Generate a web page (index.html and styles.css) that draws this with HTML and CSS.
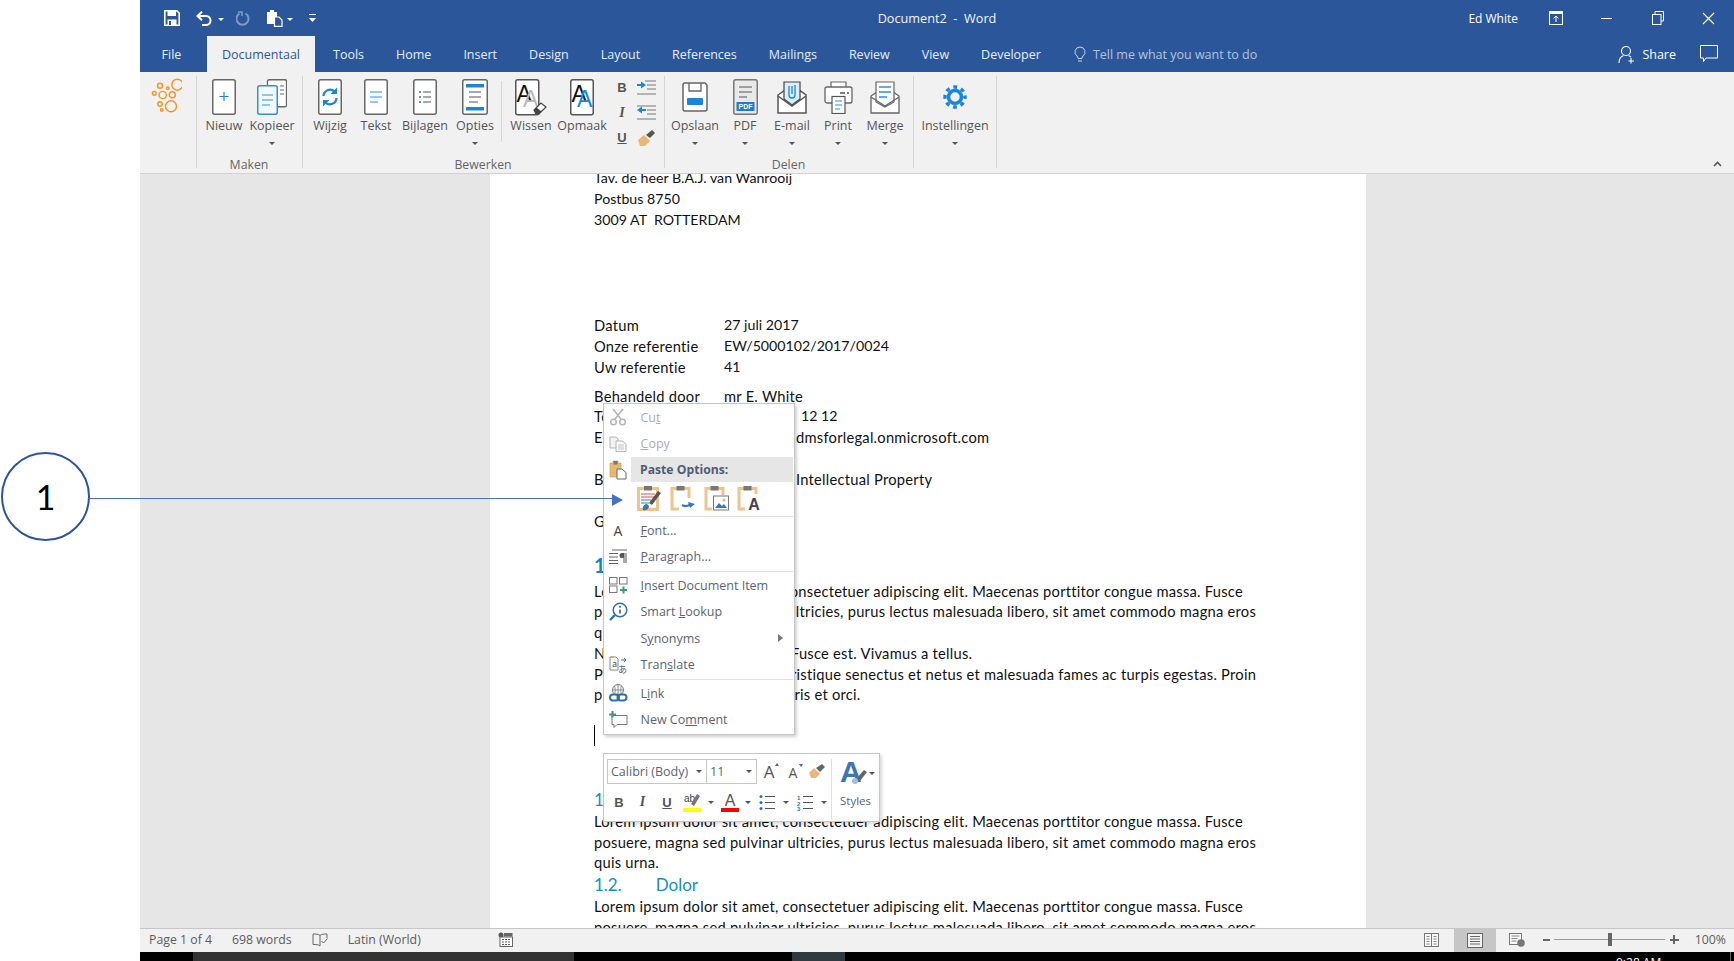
FILE: index.html
```html
<!DOCTYPE html>
<html lang="en">
<head>
  <meta charset="UTF-8">
  <title>Document2 - Word</title>
  <link rel="stylesheet" href="styles.css">
</head>
<body>
<div class="app">
  <div class="gutter"></div>

  <div class="word">
    <!-- title bar -->
    <div class="titlebar">
      <div class="qat">
        <svg class="q-save" width="16" height="16" viewBox="0 0 16 16"><path d="M.8.8h12l2.4 2.4v12H.8z" fill="none" stroke="#fff" stroke-width="1.6"/><rect x="3.5" y="1" width="8.5" height="5" fill="#fff"/><rect x="3.5" y="9.5" width="9" height="5.5" fill="#fff"/><rect x="5" y="11" width="2" height="4" fill="#2b579a"/></svg>
        <svg class="q-undo" width="16" height="15" viewBox="0 0 16 15"><path d="M3 5h7a4.5 4.5 0 0 1 0 9H6" fill="none" stroke="#fff" stroke-width="2"/><path d="M6 .8 1.5 5 6 9.2" fill="none" stroke="#fff" stroke-width="2"/></svg>
        <span class="caret caret-white q-dd1"></span>
        <svg class="q-redo" width="14" height="15" viewBox="0 0 14 15"><path d="M9.5 2.5a6 6 0 1 1-6 0" fill="none" stroke="#7e9bc6" stroke-width="2"/><path d="M2 1h4v4" fill="none" stroke="#7e9bc6" stroke-width="1.6"/></svg>
        <svg class="q-paste" width="18" height="18" viewBox="0 0 18 18"><path d="M1 3h3V1h4v2h3v12H1z" fill="#fff"/><path d="M8.5 8H13l3 3v6.300H8.500z" fill="#2b579a" stroke="#fff" stroke-width="1.200"/></svg>
        <span class="caret caret-white q-dd2"></span>
        <svg class="q-cust" width="7" height="9" viewBox="0 0 7 9"><rect y="0" width="7" height="1" fill="#fff"/><path d="M0 4h7L3.500 8z" fill="#fff"/></svg>
      </div>
      <div class="doc-title">Document2 &nbsp;-&nbsp; Word</div>
      <div class="win-side">
        <span class="user">Ed White</span>
        <span class="win-btn"><svg width="14" height="14" viewBox="0 0 14 14"><rect x=".5" y=".5" width="13" height="13" fill="none" stroke="#fff"/><rect x="1" y="1" width="12" height="2" fill="#fff"/><path d="M7 11V5M4.500 7.500 7 5l2.500 2.500" fill="none" stroke="#fff"/></svg></span>
        <span class="win-btn"><svg width="11" height="11" viewBox="0 0 11 11"><rect y="5" width="11" height="1" fill="#fff"/></svg></span>
        <span class="win-btn"><svg width="12" height="14" viewBox="0 0 12 14"><path d="M3 3V.5h8.500V10H9" fill="none" stroke="#fff"/><rect x=".5" y="3.500" width="8.500" height="10" fill="none" stroke="#fff"/></svg></span>
        <span class="win-btn"><svg width="13" height="13" viewBox="0 0 13 13"><path d="M1 1l11 11M12 1 1 12" stroke="#fff" stroke-width="1.100"/></svg></span>
      </div>
    </div>

    <!-- tabs -->
    <div class="tabs">
      <span class="tab tab-file">File</span>
      <span class="tab tab-active">Documentaal</span>
      <span class="tab">Tools</span>
      <span class="tab">Home</span>
      <span class="tab">Insert</span>
      <span class="tab">Design</span>
      <span class="tab">Layout</span>
      <span class="tab">References</span>
      <span class="tab">Mailings</span>
      <span class="tab">Review</span>
      <span class="tab">View</span>
      <span class="tab">Developer</span>
      <span class="tell">
        <svg width="12" height="17" viewBox="0 0 12 17"><path d="M6 1a5 5 0 0 0-3 9c.6.600 1 1.400 1 2.500h4c0-1.100.4-1.900 1-2.500a5 5 0 0 0-3-9z" fill="none" stroke="#c9d6ea"/><path d="M4 15h4" stroke="#c9d6ea"/></svg>
        Tell me what you want to do
      </span>
      <span class="share">
        <svg width="18" height="19" viewBox="0 0 18 19"><circle cx="8" cy="6" r="4.500" fill="none" stroke="#fff" stroke-width="1.100"/><path d="M1 18c0-4 2-6.500 4.500-7.500M10.500 10.500c1 .4 2 1 2.500 1.800" fill="none" stroke="#fff" stroke-width="1.100"/><path d="M13 13v5.500M10.500 16h5.500" stroke="#fff" stroke-width="1.100"/></svg>
        <span class="share-txt">Share</span>
      </span>
      <svg class="comment" width="18" height="18" viewBox="0 0 18 18"><path d="M.5.5h17v12.500H6l-2.500 3.500V13H.5z" fill="none" stroke="#fff"/></svg>
    </div>

    <!-- ribbon -->
    <div class="ribbon">
      <div class="group g-logo">
        <svg class="logo" width="32" height="38" viewBox="0 0 32 38"><g fill="none" stroke="#f7941d" stroke-width="1.400"><circle cx="27.300" cy="7.700" r="5.500"/><circle cx="10" cy="8.700" r="2.500"/><circle cx="17.700" cy="11.300" r="1.300"/><circle cx="4.300" cy="16.300" r="1.900"/><circle cx="12.700" cy="18" r="3.600"/><circle cx="22.300" cy="17.700" r="3"/><circle cx="10" cy="27" r="2.200"/><circle cx="21" cy="29.300" r="5.500"/><circle cx="11.700" cy="33" r="1.300"/></g></svg>
      </div>

      <div class="group g-maken">
        <div class="btns">
          <div class="rb w48">
            <div class="ico"><svg width="24" height="36" viewBox="0 0 24 36"><rect x=".75" y=".75" width="22.500" height="34.500" rx="2" fill="#fff" stroke="#666" stroke-width="1.500"/><path d="M12 13v9M7.500 17.500h9" stroke="#1a86d9" stroke-width="1.200"/></svg></div>
            <span class="rb-label">Nieuw</span>
          </div>
          <div class="rb w48">
            <div class="ico"><svg width="30" height="36" viewBox="0 0 30 36"><rect x="10.500" y=".75" width="19" height="27" rx="1.500" fill="#fff" stroke="#666" stroke-width="1.300"/><path d="M23 7h4M23 11h4M23 15h4" stroke="#666"/><rect x=".75" y="6.750" width="19.500" height="28.500" rx="2" fill="#f3f9ff" stroke="#2e8fe0" stroke-width="1.500"/><path d="M5 16h11M5 21h11M5 26h8" stroke="#2e8fe0" stroke-width="1.200"/></svg></div>
            <span class="rb-label">Kopieer</span>
            <span class="caret"></span>
          </div>
        </div>
        <div class="group-label">Maken</div>
      </div>

      <div class="group g-bewerken">
        <div class="btns">
          <div class="rb w48">
            <div class="ico"><svg width="24" height="36" viewBox="0 0 24 36"><rect x=".75" y=".75" width="22.500" height="34.500" rx="2" fill="#fff" stroke="#666" stroke-width="1.500"/><path d="M5.500 17a6.500 6.500 0 0 1 11-4.500M18.500 19a6.500 6.500 0 0 1-11 4.500" fill="none" stroke="#1a86d9" stroke-width="2.200"/><path d="M19 8.500v6.500h-6.500zM5 27.500V21h6.500z" fill="#1a86d9"/></svg></div>
            <span class="rb-label">Wijzig</span>
          </div>
          <div class="rb w44">
            <div class="ico"><svg width="24" height="36" viewBox="0 0 24 36"><rect x=".75" y=".75" width="22.500" height="34.500" rx="2" fill="#fff" stroke="#666" stroke-width="1.500"/><path d="M6 13h12M6 18h12M6 23h8" stroke="#2e8fe0" stroke-width="1.200"/></svg></div>
            <span class="rb-label">Tekst</span>
          </div>
          <div class="rb w54">
            <div class="ico"><svg width="24" height="36" viewBox="0 0 24 36"><rect x=".75" y=".75" width="22.500" height="34.500" rx="2" fill="#fff" stroke="#666" stroke-width="1.500"/><path d="M6 13h2M6 18h2M6 23h2" stroke="#1e6fb8" stroke-width="1.600"/><path d="M10 13h8M10 18h8M10 23h8" stroke="#555" stroke-width="1.100"/></svg></div>
            <span class="rb-label">Bijlagen</span>
          </div>
          <div class="rb w46">
            <div class="ico"><svg width="26" height="36" viewBox="0 0 26 36"><rect x=".75" y=".75" width="24.500" height="34.500" rx="2" fill="#fff" stroke="#666" stroke-width="1.500"/><rect x="4" y="5" width="18" height="3.500" fill="#1a86d9"/><rect x="4" y="28" width="18" height="3.500" fill="#1a86d9"/><path d="M7 13h12M7 18h12M7 23h9" stroke="#555" stroke-width="1.100"/></svg></div>
            <span class="rb-label">Opties</span>
            <span class="caret"></span>
          </div>
          <div class="rb-sep"></div>
          <div class="rb w50">
            <div class="ico"><svg width="32" height="37" viewBox="0 0 32 37"><rect x=".75" y=".75" width="23" height="35" rx="2" fill="#fff" stroke="#555" stroke-width="1.500"/><text x="1.500" y="23" class="svg-a a-dark">A</text><text x="8" y="28" class="svg-a a-gray">A</text><path d="M19 31l7-7 5 4-7 7h-3z" fill="#fff" stroke="#444" stroke-width="1.200"/><path d="M19 31l2.500-2.500 5 4L24 35h-3z" fill="#444"/></svg></div>
            <span class="rb-label">Wissen</span>
          </div>
          <div class="rb w52">
            <div class="ico"><svg width="24" height="37" viewBox="0 0 24 37"><rect x=".75" y=".75" width="22.500" height="35" rx="2" fill="#fff" stroke="#555" stroke-width="1.500"/><text x="1.500" y="23" class="svg-a a-dark">A</text><text x="7" y="28" class="svg-a a-blue">A</text></svg></div>
            <span class="rb-label">Opmaak</span>
          </div>
          <div class="small-grid">
            <span class="fmt fmt-b">B</span>
            <svg width="19" height="15" viewBox="0 0 19 15"><path d="M8 1h11M10 5h9M10 9h9M0 14h19" stroke="#777"/><path d="M0 5h4" stroke="#1a86d9" stroke-width="2"/><path d="M4 1.500 9 5 4 8.500z" fill="#1a86d9"/></svg>
            <span class="fmt fmt-i">I</span>
            <svg width="19" height="15" viewBox="0 0 19 15"><path d="M0 1h19M10 5h9M10 9h9M0 14h19" stroke="#777"/><path d="M5 5h4" stroke="#1a86d9" stroke-width="2"/><path d="M5 1.500 0 5l5 3.500z" fill="#1a86d9"/></svg>
            <span class="fmt fmt-u">U</span>
            <svg width="19" height="17" viewBox="0 0 19 17"><path d="M1 11l6-5 6 6-5 5H3z" fill="#e8b776"/><path d="M9 6l6-5 3 3-5 5z" fill="#555"/></svg>
          </div>
        </div>
        <div class="group-label">Bewerken</div>
      </div>

      <div class="group g-delen">
        <div class="btns">
          <div class="rb w54">
            <div class="ico ico-low3"><svg width="26" height="30" viewBox="0 0 26 30"><path d="M3 1h20l2 2v24a2 2 0 0 1-2 2H3a2 2 0 0 1-2-2V3a2 2 0 0 1 2-2z" fill="#fff" stroke="#666" stroke-width="1.500"/><path d="M7 1v8h12V1" fill="none" stroke="#666" stroke-width="1.300"/><rect x="5" y="16" width="16" height="7" rx="1" fill="#1a86d9"/></svg></div>
            <span class="rb-label">Opslaan</span>
            <span class="caret"></span>
          </div>
          <div class="rb w46">
            <div class="ico"><svg width="25" height="36" viewBox="0 0 25 36"><rect x=".75" y=".75" width="23.500" height="34.500" rx="2" fill="#e9e9e9" stroke="#777" stroke-width="1.500"/><path d="M6 8h13M6 13h13M6 18h8" stroke="#555" stroke-width="1.200"/><rect x="3.500" y="23" width="18" height="9" fill="#1a7fd4"/><text x="12.500" y="30.300" class="svg-pdf">PDF</text></svg></div>
            <span class="rb-label">PDF</span>
            <span class="caret"></span>
          </div>
          <div class="rb w48">
            <div class="ico ico-low2"><svg width="30" height="33" viewBox="0 0 30 33"><path d="M1 14 15 4l14 10v18H1z" fill="#fff" stroke="#555" stroke-width="1.500"/><path d="M7 1h16v17l-8 6-8-6z" fill="#dbecfb" stroke="#444" stroke-width="1.200"/><path d="M12 5v9a3 3 0 0 0 6 0V4M15 5v8" fill="none" stroke="#1a86d9" stroke-width="1.300"/><path d="M1 15l14 10 14-10" fill="none" stroke="#555" stroke-width="1.500"/></svg></div>
            <span class="rb-label">E-mail</span>
            <span class="caret"></span>
          </div>
          <div class="rb w44">
            <div class="ico ico-low2"><svg width="29" height="33" viewBox="0 0 29 33"><path d="M7 6V1h15v5" fill="#fff" stroke="#666" stroke-width="1.200"/><rect x="1" y="6" width="27" height="16" rx="2" fill="#fff" stroke="#666" stroke-width="1.300"/><path d="M16 12h5M23 12h2" stroke="#555" stroke-width="1.300"/><rect x="8" y="15.500" width="13" height="17" fill="#fff" stroke="#555" stroke-width="1.200"/><path d="M11 20h7M11 24h7M11 28h5" stroke="#2e8fe0" stroke-width="1.200"/></svg></div>
            <span class="rb-label">Print</span>
            <span class="caret"></span>
          </div>
          <div class="rb w50">
            <div class="ico ico-low2"><svg width="30" height="33" viewBox="0 0 30 33"><path d="M1 15 7 11h16l6 4v17H1z" fill="#fff" stroke="#666" stroke-width="1.300"/><path d="M6 1h18v20l-9 5-9-5z" fill="#fff" stroke="#666" stroke-width="1.200"/><path d="M9 6h12M9 11h12M9 16h8" stroke="#2e8fe0" stroke-width="1.300"/><path d="M1 16l14 9 14-9" fill="none" stroke="#666" stroke-width="1.300"/></svg></div>
            <span class="rb-label">Merge</span>
            <span class="caret"></span>
          </div>
        </div>
        <div class="group-label">Delen</div>
      </div>

      <div class="group g-inst">
        <div class="btns">
          <div class="rb w82">
            <div class="ico ico-low6"><svg width="24" height="24" viewBox="0 0 24 24"><circle cx="12" cy="12" r="6.500" fill="none" stroke="#1a86d9" stroke-width="3.600"/><circle cx="12" cy="12" r="10" fill="none" stroke="#1a86d9" stroke-width="3.400" stroke-dasharray="3.900 3.950" stroke-dashoffset="2"/></svg></div>
            <span class="rb-label">Instellingen</span>
            <span class="caret"></span>
          </div>
        </div>
      </div>

      <svg class="collapse" width="9" height="6" viewBox="0 0 9 6"><path d="M1 5l3.500-3.500L8 5" fill="none" stroke="#555" stroke-width="1.600"/></svg>
    </div>

    <!-- document -->
    <div class="docarea">
      <div class="page">
        <div class="sheet">
          <p class="line tight">Tav. de heer B.A.J. van Wanrooij</p>
          <p class="line tight">Postbus 8750</p>
          <p class="line tight">3009 AT&nbsp; ROTTERDAM</p>

          <p class="line ref sp-85"><span>Datum</span><span class="tight">27 juli 2017</span></p>
          <p class="line ref"><span>Onze referentie</span><span class="tight">EW/5000102/2017/0024</span></p>
          <p class="line ref"><span>Uw referentie</span><span class="tight">41</span></p>
          <p class="line ref sp-8"><span>Behandeld door</span><span>mr E. White</span></p>
          <p class="line ref"><span>Telefoon</span><span class="tight"><span class="pad pad-tel">+31 (0)10</span>12 12</span></p>
          <p class="line ref"><span>E-mail</span><span><span class="pad pad-val">e.white@</span>dmsforlegal.onmicrosoft.com</span></p>
          <p class="line ref sp-21"><span>Betreft</span><span><span class="pad pad-val">Advies</span>Intellectual Property</span></p>
          <p class="line sp-21">Geachte heer Van Wanrooij,</p>

          <h2 class="h1">1.<span class="h-gap"></span>Lorem ipsum</h2>
          <p class="line">Lorem ipsum dolor sit amet, consectetuer adipiscing elit. Maecenas porttitor congue massa. Fusce</p>
          <p class="line">posuere, magna sed pulvinar ultricies, purus lectus malesuada libero, sit amet commodo magna eros</p>
          <p class="line">quis urna.</p>
          <p class="line">Nunc viverra imperdiet enim. Fusce est. Vivamus a tellus.</p>
          <p class="line">Pellentesque habitant morbi tristique senectus et netus et malesuada fames ac turpis egestas. Proin</p>
          <p class="line">pharetra nonummy pede. Mauris et orci.</p>
          <p class="line sp-20"><span class="cursor"></span></p>

          <h3 class="h2 sp-h">1.1.<span class="h-gap2"></span>Ipsum</h3>
          <p class="line">Lorem ipsum dolor sit amet, consectetuer adipiscing elit. Maecenas porttitor congue massa. Fusce</p>
          <p class="line">posuere, magna sed pulvinar ultricies, purus lectus malesuada libero, sit amet commodo magna eros</p>
          <p class="line">quis urna.</p>
          <h3 class="h2 sp-1">1.2.<span class="h-gap2"></span>Dolor</h3>
          <p class="line">Lorem ipsum dolor sit amet, consectetuer adipiscing elit. Maecenas porttitor congue massa. Fusce</p>
          <p class="line">posuere, magna sed pulvinar ultricies, purus lectus malesuada libero, sit amet commodo magna eros</p>
        </div>
      </div>

      <!-- context menu -->
      <div class="menu">
        <div class="mi off">
          <span class="mi-ico"><svg width="18" height="18" viewBox="0 0 18 18"><path d="M4 1l8 10M14 1 6 11" stroke="#b5b5b5" stroke-width="1.600"/><circle cx="4.500" cy="14" r="2.800" fill="none" stroke="#b5b5b5" stroke-width="1.500"/><circle cx="13.500" cy="14" r="2.800" fill="none" stroke="#b5b5b5" stroke-width="1.500"/></svg></span>
          <span>Cu<u>t</u></span>
        </div>
        <div class="mi off">
          <span class="mi-ico"><svg width="18" height="16" viewBox="0 0 18 16"><path d="M1 1h6l2 2v9H1z" fill="#f3f3f3" stroke="#b5b5b5"/><path d="M7 5h6l4 3v7.500H7z" fill="#fafafa" stroke="#b5b5b5"/><path d="M9 9h6M9 11h6M9 13h6" stroke="#c5c5c5"/></svg></span>
          <span><u>C</u>opy</span>
        </div>
        <div class="mi-head">
          <span class="mi-ico"><svg width="18" height="20" viewBox="0 0 18 20"><path d="M1 3h3V1h5v2h3v14H1z" fill="#e8b776" stroke="#c99750" stroke-width=".6"/><rect x="4.500" y="1" width="4" height="3.500" fill="#777"/><path d="M8 9h5l4 3.500V19H8z" fill="#fff" stroke="#666"/></svg></span>
          <span class="mi-head-txt">Paste Options:</span>
        </div>
        <div class="paste-row">
          <svg width="25" height="26" viewBox="0 0 25 26"><path d="M1.500 3.500h19v21h-19z" fill="#fff" stroke="#ecc48f" stroke-width="3"/><rect x="7" y="1" width="8" height="4.500" fill="#777"/><path d="M4 9h14M4 12h14" stroke="#d9534f"/><path d="M4 15h10M4 18h8" stroke="#3f7fbf"/><path d="M6 25c-1-3 1-6 4-6l2 2c0 3-3 5-6 4z" fill="#3d75b6"/><path d="M12 18l9-12 3 2-9 12z" fill="#555"/></svg>
          <svg width="25" height="26" viewBox="0 0 25 26"><path d="M9 24H2V3.500h17V13" fill="#fff" stroke="#ecc48f" stroke-width="3"/><rect x="6.500" y="1" width="8" height="4.500" fill="#777"/><path d="M12 20c4 2 7 1 9-2" fill="none" stroke="#3d75b6" stroke-width="2.200"/><path d="M25 19l-5 4-2-6z" fill="#3d75b6"/></svg>
          <svg width="25" height="26" viewBox="0 0 25 26"><path d="M8 24H2V3.500h17V10" fill="#fff" stroke="#ecc48f" stroke-width="3"/><rect x="6.500" y="1" width="8" height="4.500" fill="#777"/><rect x="9.500" y="11" width="15" height="14" fill="#fff" stroke="#777"/><path d="M11 23l4-5 3 3 2-2 3 4z" fill="#3d75b6"/><circle cx="20" cy="15" r="1.500" fill="#e8b776"/></svg>
          <svg width="25" height="26" viewBox="0 0 25 26"><path d="M8 24H2V3.500h17V9" fill="#fff" stroke="#ecc48f" stroke-width="3"/><rect x="6.500" y="1" width="8" height="4.500" fill="#777"/><text x="17" y="25" class="svg-a-paste">A</text></svg>
        </div>
        <div class="mi-sep"></div>
        <div class="mi">
          <span class="mi-ico mi-a">A</span>
          <span><u>F</u>ont...</span>
        </div>
        <div class="mi">
          <span class="mi-ico"><svg width="18" height="15" viewBox="0 0 18 15"><path d="M3 1h15M0 4.500h9M0 8h9M0 11.500h9M0 14.500h9" stroke="#666"/><path d="M15 4v10M17 4v10" stroke="#555"/><path d="M15 4h-2a2.500 2.500 0 0 0 0 5h2z" fill="#555"/></svg></span>
          <span><u>P</u>aragraph...</span>
        </div>
        <div class="mi-sep"></div>
        <div class="mi">
          <span class="mi-ico"><svg width="19" height="17" viewBox="0 0 19 17"><rect x=".5" y=".5" width="7.500" height="6.500" fill="#fff" stroke="#777"/><rect x="10.500" y=".5" width="7.500" height="6.500" fill="#fff" stroke="#777"/><rect x=".5" y="9" width="7.500" height="6.500" fill="#fff" stroke="#777"/><path d="M14.500 9.500v7M11 13h7" stroke="#3f9b6e" stroke-width="2"/></svg></span>
          <span><u>I</u>nsert Document Item</span>
        </div>
        <div class="mi">
          <span class="mi-ico"><svg width="19" height="19" viewBox="0 0 19 19"><circle cx="11" cy="8" r="6.800" fill="#fff" stroke="#2e6fb0" stroke-width="1.500"/><path d="M6 13l-5 5" stroke="#2e6fb0" stroke-width="2.400"/><path d="M11 7.500v4" stroke="#555" stroke-width="1.600"/><circle cx="11" cy="4.800" r="1" fill="#555"/></svg></span>
          <span>Smart <u>L</u>ookup</span>
        </div>
        <div class="mi">
          <span class="mi-ico"></span>
          <span>S<u>y</u>nonyms</span><span class="sub-arrow"></span>
        </div>
        <div class="mi">
          <span class="mi-ico"><svg width="19" height="18" viewBox="0 0 19 18"><path d="M1 1h6l2 2v11H1z" fill="#fff" stroke="#888"/><path d="M2 1h3" stroke="#e8a33d" stroke-width="1.500"/><text x="3" y="11" class="svg-tr">a</text><text x="9" y="17" class="svg-tr">あ</text><path d="M12 4h5M15 2l2 2-2 2" fill="none" stroke="#2e6fb0"/></svg></span>
          <span>Tran<u>s</u>late</span>
        </div>
        <div class="mi-sep"></div>
        <div class="mi">
          <span class="mi-ico"><svg width="19" height="18" viewBox="0 0 19 18"><circle cx="9" cy="6" r="5.500" fill="none" stroke="#777"/><path d="M3.500 6h11M9 .5v11M5.500 2c1 2 1 6 0 8M12.500 2c-1 2-1 6 0 8" fill="none" stroke="#777" stroke-width=".8"/><rect x="1" y="10.500" width="9" height="6" rx="3" fill="none" stroke="#2e6fb0" stroke-width="2"/><rect x="8.500" y="10.500" width="9" height="6" rx="3" fill="none" stroke="#2e6fb0" stroke-width="2"/></svg></span>
          <span>L<u>i</u>nk</span>
        </div>
        <div class="mi">
          <span class="mi-ico"><svg width="19" height="17" viewBox="0 0 19 17"><path d="M3 4.500h15v9H8l-3 3v-3H3z" fill="#fff" stroke="#777"/><path d="M3.500 0v6.500M0 3.500h7" stroke="#3f9b6e" stroke-width="2"/></svg></span>
          <span>New Co<u>m</u>ment</span>
        </div>
      </div>

      <!-- mini toolbar -->
      <div class="mini">
        <div class="mini-main">
          <div class="mini-r1">
            <span class="sel sel-font">Calibri (Body)<span class="caret"></span></span>
            <span class="sel sel-size">11<span class="caret"></span></span>
            <span class="grow"><span class="grow-a">A</span><span class="tip tip-up"></span></span>
            <span class="grow"><span class="grow-a small">A</span><span class="tip tip-down"></span></span>
            <svg class="mini-brush" width="18" height="15" viewBox="0 0 18 15"><path d="M1 9l5-5 6 6-4 4H3z" fill="#e8b776"/><path d="M8 4l6-4 3 3-5 5z" fill="#666"/></svg>
          </div>
          <div class="mini-r2">
            <span class="fmt fmt-b">B</span>
            <span class="fmt fmt-i">I</span>
            <span class="fmt fmt-u">U</span>
            <svg width="18" height="21" viewBox="0 0 18 21"><text x="1" y="10" class="svg-hl">ab</text><path d="M8 12l6-10 3 2-6 10z" fill="#777"/><rect y="16" width="18" height="4" fill="#ffff00"/></svg>
            <span class="caret"></span>
            <svg width="18" height="21" viewBox="0 0 18 21"><text x="9" y="14" class="svg-fc">A</text><rect y="16" width="18" height="4" fill="#ff0000"/></svg>
            <span class="caret"></span>
            <svg width="16" height="17" viewBox="0 0 16 17"><circle cx="2" cy="2.500" r="1.500" fill="#2e6fb0"/><circle cx="2" cy="8.500" r="1.500" fill="#2e6fb0"/><circle cx="2" cy="14.500" r="1.500" fill="#2e6fb0"/><path d="M6 2.500h10M6 8.500h10M6 14.500h10" stroke="#555"/></svg>
            <span class="caret"></span>
            <svg width="16" height="17" viewBox="0 0 16 17"><text x="0" y="5.500" class="svg-num">1</text><text x="0" y="11.500" class="svg-num">2</text><text x="0" y="17" class="svg-num">3</text><path d="M6 2.500h10M6 8.500h10M6 14.500h10" stroke="#555"/></svg>
            <span class="caret"></span>
          </div>
        </div>
        <div class="mini-styles">
          <svg width="32" height="27" viewBox="0 0 32 27"><text x="0" y="23" class="svg-sty">A</text><path d="M16 20l8-9 3 2-7 9z" fill="#666"/><circle cx="15" cy="22" r="3" fill="#9cc0e6"/></svg>
          <span class="caret caret-abs"></span>
          <span class="mini-styles-txt">Styles</span>
        </div>
      </div>
    </div>

    <!-- status bar -->
    <div class="status">
      <span class="st-txt st-page">Page 1 of 4</span>
      <span class="st-txt st-words">698 words</span>
      <svg class="st-book" width="16" height="14" viewBox="0 0 16 14"><path d="M8 2.500C6.500 1 4 1 1 1v10.500c3 0 5.500 0 7 1.500" fill="none" stroke="#666"/><path d="M8 2.500V13" stroke="#666"/><path d="M8 2.500C9.500 1 12 1 15 1v4" fill="none" stroke="#666"/><path d="M9.500 8l2 2 4-4.500" fill="none" stroke="#666"/></svg>
      <span class="st-txt st-lang">Latin (World)</span>
      <svg class="st-macro" width="15" height="15" viewBox="0 0 15 15"><circle cx="3" cy="3" r="2.500" fill="#555"/><rect x="2" y="5" width="12.500" height="9.500" fill="#fff" stroke="#666"/><path d="M4 7.500h9M4 10h9M4 12.500h9" stroke="#666" stroke-dasharray="2 1"/><rect x="6" y="1" width="8.500" height="3.500" fill="#666"/></svg>

      <div class="st-right">
        <svg width="15" height="14" viewBox="0 0 15 14"><rect x=".5" y=".5" width="14" height="13" fill="#f7f7f7" stroke="#777"/><path d="M7.500 1v12" stroke="#777"/><path d="M2.500 3.500h3M2.500 6h3M2.500 8.500h3M2.500 11h3M9.500 3.500h3M9.500 6h3M9.500 8.500h3M9.500 11h3" stroke="#888"/></svg>
        <span class="st-active"><svg width="16" height="15" viewBox="0 0 16 15"><rect x=".5" y=".5" width="15" height="14" fill="#f3f3f3" stroke="#666"/><path d="M3 3.500h10M3 6h10M3 8.500h10M3 11h10" stroke="#666"/></svg></span>
        <svg class="st-web" width="16" height="14" viewBox="0 0 16 14"><rect x=".5" y=".5" width="12" height="11" fill="#f7f7f7" stroke="#777"/><path d="M2.500 3h8M2.500 5.500h6M2.500 8h5" stroke="#888"/><circle cx="12" cy="10" r="3.800" fill="#777"/></svg>
        <span class="zoom-minus"></span>
        <span class="slider"><span class="thumb"></span></span>
        <span class="zoom-plus"></span>
        <span class="st-txt st-pct">100%</span>
      </div>
    </div>

    <!-- taskbar, cut off by the screenshot -->
    <div class="taskbar">
      <span class="tb-a"></span>
      <span class="tb-b"></span>
      <span class="tb-c"></span>
      <span class="clock">9:28 AM</span>
      <span class="tb-edge"></span>
    </div>
  </div>

  <!-- callout -->
  <div class="callout">
    <div class="callout-num">1</div>
    <div class="callout-line"></div>
    <div class="callout-arrow"></div>
  </div>
</div>
</body>
</html>
```

FILE: styles.css
```css
* {
  box-sizing: border-box;
}

body {
  margin: 0;
  overflow: hidden;
  background: #fff;
  font-family: "Open Sans", sans-serif;
}

.app {
  position: relative;
  display: flex;
  width: 1734px;
  height: 961px;
}

.gutter {
  width: 140px;
  background: #fff;
}

.word {
  flex: 1;
  display: flex;
  flex-direction: column;
  min-width: 0;
}

/* title bar */
.titlebar {
  display: grid;
  grid-template-columns: 1fr auto 1fr;
  align-items: center;
  height: 36px;
  padding-bottom: 1px;
  background: #2b579a;
  color: #fff;
}

.qat {
  display: flex;
  align-items: center;
  padding-left: 24px;
}

.q-undo { margin-left: 16px; }
.q-dd1 { margin-left: 6px; margin-top: 3px; }
.q-redo { margin-left: 12px; }
.q-paste { margin-left: 16px; }
.q-dd2 { margin-left: 3px; margin-top: 3px; }
.q-cust { margin-left: 16px; }

.caret {
  display: inline-block;
  width: 0;
  height: 0;
  border-left: 3px solid transparent;
  border-right: 3px solid transparent;
  border-top: 3px solid #555;
}

.caret-white {
  border-top-color: #fff;
}

.doc-title {
  font-size: 12.7px;
  color: #f2f5fa;
}

.win-side {
  display: flex;
  align-items: center;
  justify-content: flex-end;
}

.user {
  margin-right: 12px;
  font-size: 12px;
}

.win-btn {
  display: flex;
  align-items: center;
  justify-content: center;
  width: 51px;
  height: 36px;
}

/* tabs */
.tabs {
  display: flex;
  align-items: stretch;
  height: 36px;
  background: #2b579a;
  color: #e6ecf5;
  font-size: 12.5px;
}

.tab {
  display: flex;
  align-items: center;
  padding: 0 16px;
}

.tab-file {
  justify-content: center;
  width: 67px;
  padding: 0 4px 0 0;
}

.tab-active {
  justify-content: center;
  width: 108px;
  margin-right: 2px;
  padding: 0;
  background: #f1f1f1;
  color: #2b579a;
}

.tell {
  display: flex;
  align-items: center;
  gap: 7px;
  margin-left: 17px;
  color: #b4c4dd;
}

.share {
  display: flex;
  align-items: center;
  gap: 6px;
  margin-left: auto;
  color: #fff;
}

.comment {
  align-self: center;
  margin: 0 16px 0 24px;
}

/* ribbon */
.ribbon {
  position: relative;
  display: flex;
  height: 102px;
  padding-top: 4px;
  background: #f1f1f1;
  border-bottom: 1px solid #d2d2d2;
}

.group {
  display: flex;
  flex-direction: column;
  height: 92px;
  padding-top: 2px;
  border-right: 1px solid #d5d5d5;
}

.g-logo { width: 57px; padding-left: 10px; }
.g-maken { width: 106px; padding-left: 3px; }
.g-bewerken { width: 362px; padding-left: 3px; }
.g-delen { width: 249px; padding-left: 3px; }
.g-inst { width: 83px; }

.logo {
  display: block;
  margin-top: -1px;
}

.btns {
  flex: 1;
  display: flex;
}

.group-label {
  height: 18px;
  margin: 0 0 -6px -4px;
  font-size: 12.3px;
  line-height: 18px;
  text-align: center;
  color: #666;
}

.rb {
  display: flex;
  flex-direction: column;
  align-items: center;
}

.w44 { width: 44px; }
.w46 { width: 46px; }
.w48 { width: 48px; }
.w50 { width: 50px; }
.w52 { width: 52px; }
.w54 { width: 54px; }
.w82 { width: 82px; }

.ico {
  display: flex;
  align-items: flex-start;
  justify-content: center;
  height: 39px;
  padding-top: 1px;
}

.ico-low2 { padding-top: 3px; }
.ico-low3 { padding-top: 4px; }
.ico-low6 { padding-top: 7px; }

.ico svg {
  display: block;
}

.rb-label {
  height: 18px;
  font-size: 12.5px;
  line-height: 18px;
  color: #555;
  white-space: nowrap;
}

.rb .caret {
  margin-top: 7px;
}

.rb-sep {
  width: 1px;
  height: 61px;
  margin: 3px 4px 0 3px;
  background: #d5d5d5;
}

.small-grid {
  display: grid;
  grid-template-columns: 24px 24px;
  grid-auto-rows: 25px;
  align-items: center;
  justify-items: center;
  margin: -3px 0 0 2px;
}

.fmt {
  font-family: "Liberation Sans", sans-serif;
  font-size: 13px;
  color: #555;
}

.fmt-b, .fmt-u {
  font-weight: bold;
}

.fmt-i {
  font-family: "Liberation Serif", serif;
  font-style: italic;
  font-weight: bold;
  font-size: 14px;
}

.fmt-u {
  text-decoration: underline;
}

.svg-a {
  font-family: "Liberation Sans", sans-serif;
  font-size: 23px;
}

.a-dark { fill: #111; }
.a-gray { fill: #b9b9b9; }
.a-blue { fill: #1a86d9; }

.svg-pdf {
  font-family: "Liberation Sans", sans-serif;
  font-size: 7px;
  font-weight: bold;
  fill: #fff;
  text-anchor: middle;
}

.collapse {
  position: absolute;
  right: 12px;
  bottom: 6px;
}

/* document */
.docarea {
  position: relative;
  flex: 1;
  min-height: 0;
  overflow: hidden;
  padding-left: 350px;
  background: #e6e6e6;
}

.page {
  width: 876px;
  height: 100%;
  overflow: hidden;
  background: #fff;
}

.sheet {
  margin-top: -5.8px;
  padding-left: 104px;
  font-family: Lato, sans-serif;
  font-size: 14.7px;
  letter-spacing: .25px;
  color: #111;
}

.line {
  height: 20.75px;
  margin: 0;
  line-height: 20.75px;
  white-space: nowrap;
}

.tight {
  font-size: 14.2px;
  letter-spacing: 0;
}

.ref {
  display: flex;
}

.ref > span:first-child {
  width: 130px;
}

.pad {
  display: inline-block;
  overflow: hidden;
  vertical-align: top;
}

.pad-val { width: 72px; }
.pad-tel { width: 77px; }

.sp-85 { margin-top: 85px; }
.sp-8 { margin-top: 8px; }
.sp-21 { margin-top: 21.400px; }
.sp-20 { margin-top: 20px; }
.sp-1 { margin-top: 1px; }

.cursor {
  display: inline-block;
  width: 1px;
  height: 21px;
  background: #000;
}

.h1 {
  height: 24px;
  margin: 21px 0 3.400px;
  font-size: 20px;
  font-weight: bold;
  line-height: 24px;
  letter-spacing: 0;
  color: #0f8bb0;
}

.h2 {
  height: 22px;
  margin: 0;
  font-size: 17px;
  font-weight: normal;
  line-height: 22px;
  letter-spacing: 0;
  color: #1a8fb5;
}

.h2.sp-1 {
  margin-top: 1px;
}

.sp-h {
  margin-top: 43px;
}

.h-gap {
  display: inline-block;
  width: 40px;
}

.h-gap2 {
  display: inline-block;
  width: 34px;
}

/* context menu */
.menu {
  position: absolute;
  left: 463px;
  top: 229px;
  width: 192px;
  height: 332px;
  padding: 0 1px 1px;
  background: #fff;
  border: 1px solid #c6c6c6;
  box-shadow: 2px 2px 3px rgba(0, 0, 0, .18);
  font-size: 12.5px;
  color: #5b6472;
}

.mi {
  position: relative;
  display: flex;
  align-items: center;
  height: 26.500px;
}

.mi.off {
  color: #a9adb3;
}

.mi-ico {
  display: flex;
  align-items: center;
  justify-content: center;
  flex: none;
  width: 26px;
  margin-right: 9.500px;
}

.mi-a {
  font-size: 14px;
  color: #444;
}

.mi-head {
  display: flex;
  align-items: center;
  height: 25px;
}

.mi-head .mi-ico {
  margin-right: 0;
}

.mi-head-txt {
  flex: 1;
  padding-left: 9px;
  font-size: 12.2px;
  font-weight: bold;
  line-height: 25px;
  background: #e6e6e6;
  color: #4f5d72;
}

.paste-row {
  display: flex;
  gap: 8.300px;
  height: 33px;
  padding: 3px 0 0 32px;
}

.mi-sep {
  height: 1px;
  margin: 1px 0 0 35px;
  background: #e0e0e0;
}

.sub-arrow {
  position: absolute;
  right: 10px;
  top: 9px;
  width: 0;
  height: 0;
  border-top: 4px solid transparent;
  border-bottom: 4px solid transparent;
  border-left: 5px solid #777;
}

.svg-a-paste {
  font-family: "Liberation Sans", sans-serif;
  font-size: 16px;
  font-weight: bold;
  fill: #444;
  text-anchor: middle;
}

.svg-tr {
  font-family: "Noto Sans CJK JP", sans-serif;
  font-size: 9px;
  fill: #555;
}

/* mini toolbar */
.mini {
  position: absolute;
  left: 463px;
  top: 579px;
  display: flex;
  width: 277px;
  height: 69px;
  padding: 5px 0 0 3px;
  background: #fff;
  border: 1px solid #c6c6c6;
  box-shadow: 2px 2px 3px rgba(0, 0, 0, .15);
}

.mini-main {
  width: 224px;
}

.mini-r1 {
  display: flex;
  align-items: center;
  height: 25px;
}

.sel {
  position: relative;
  display: flex;
  align-items: center;
  height: 25px;
  padding-left: 3px;
  border: 1px solid #c6c6c6;
  font-size: 12.5px;
  color: #5b6472;
}

.sel .caret {
  position: absolute;
  right: 4px;
  top: 10px;
}

.sel-font { width: 100px; }
.sel-size { width: 50px; border-left-width: 0; }

.grow {
  position: relative;
  width: 24px;
  text-align: center;
  color: #555;
}

.grow-a {
  font-size: 17px;
}

.grow-a.small {
  font-size: 14px;
}

.mini-brush {
  margin-left: 3px;
}

.tip {
  position: absolute;
  right: 2px;
  top: 3px;
  width: 0;
  height: 0;
  border-left: 2.500px solid transparent;
  border-right: 2.500px solid transparent;
}

.tip-up { border-bottom: 3px solid #2e6fb0; }
.tip-down { border-top: 3px solid #2e6fb0; }

.mini-r2 {
  display: grid;
  grid-template-columns: 24px 23px 26px 24px 13px 25px 12px 26px 12px 26px 12px;
  align-items: center;
  justify-items: center;
  height: 26px;
  margin-top: 5px;
}

.mini-styles {
  position: relative;
  display: flex;
  flex-direction: column;
  align-items: center;
  width: 48px;
  height: 60px;
  border-left: 1px solid #e0e0e0;
}

.caret-abs {
  position: absolute;
  right: 4px;
  top: 13px;
}

.mini-styles-txt {
  margin-top: 7px;
  font-size: 11.5px;
  color: #5b6472;
}

.svg-hl {
  font-family: "Liberation Sans", sans-serif;
  font-size: 10px;
  fill: #444;
}

.svg-fc {
  font-family: "Liberation Sans", sans-serif;
  font-size: 16px;
  fill: #555;
  text-anchor: middle;
}

.svg-num {
  font-family: "Liberation Sans", sans-serif;
  font-size: 6px;
  font-weight: bold;
  fill: #2e6fb0;
}

.svg-sty {
  font-family: "Liberation Sans", sans-serif;
  font-size: 30px;
  font-weight: bold;
  fill: #3d75b6;
}

/* status bar */
.status {
  position: relative;
  display: flex;
  align-items: center;
  height: 24px;
  padding-bottom: 2px;
  background: #f1f1f1;
  border-top: 1px solid #c6c6c6;
}

.st-txt {
  font-size: 12.300px;
  color: #5c5c5c;
}

.st-page { margin-left: 9px; }
.st-words { margin-left: 20px; }
.st-book { margin-left: 20px; }
.st-lang { margin-left: 20px; }
.st-macro { margin-left: 77px; }

.st-right {
  display: flex;
  align-items: center;
  height: 21px;
  margin-left: auto;
  padding-right: 8px;
}

.st-active {
  display: flex;
  align-items: center;
  justify-content: center;
  align-self: flex-start;
  width: 42px;
  height: 23px;
  margin-left: 15px;
  background: #c6c6c6;
}

.st-web {
  margin-left: 13px;
}

.zoom-minus {
  width: 7px;
  height: 2px;
  margin-left: 18px;
  background: #666;
}

.slider {
  position: relative;
  width: 111px;
  height: 1px;
  margin-left: 4px;
  background: #999;
}

.thumb {
  position: absolute;
  left: 54px;
  top: -6px;
  width: 4px;
  height: 13px;
  background: #666;
}

.zoom-plus {
  position: relative;
  width: 9px;
  height: 2px;
  margin-left: 5px;
  background: #666;
}

.zoom-plus::after {
  content: "";
  position: absolute;
  left: 3.500px;
  top: -3.500px;
  width: 2px;
  height: 9px;
  background: #666;
}

.st-pct {
  margin-left: 16px;
}

/* taskbar */
.taskbar {
  position: relative;
  display: flex;
  height: 9px;
  padding-left: 53px;
  overflow: hidden;
  background: #000;
}

.tb-a { width: 381px; background: #333; }
.tb-b { width: 218px; }
.tb-c { width: 53px; background: #2f3a40; }

.clock {
  position: absolute;
  left: 1476px;
  top: 3px;
  font-size: 12px;
  line-height: 16px;
  color: #fff;
}

.tb-edge {
  position: absolute;
  right: 3px;
  top: 0;
  width: 1px;
  height: 9px;
  background: #666;
}

/* callout */
.callout {
  position: absolute;
  left: 1px;
  top: 452px;
  display: flex;
  align-items: center;
  width: 622px;
}

.callout-num {
  flex: none;
  width: 89px;
  height: 89px;
  border: 2px solid #2f5597;
  border-radius: 50%;
  background: #fff;
  font-family: Lato, sans-serif;
  font-size: 34px;
  line-height: 85px;
  text-align: center;
  color: #000;
}

.callout-line {
  flex: 1;
  height: 1px;
  margin-top: 3px;
  background: #4472c4;
}

.callout-arrow {
  flex: none;
  width: 0;
  height: 0;
  margin-top: 6px;
  border-top: 6px solid transparent;
  border-bottom: 6px solid transparent;
  border-left: 11px solid #4472c4;
}
```
